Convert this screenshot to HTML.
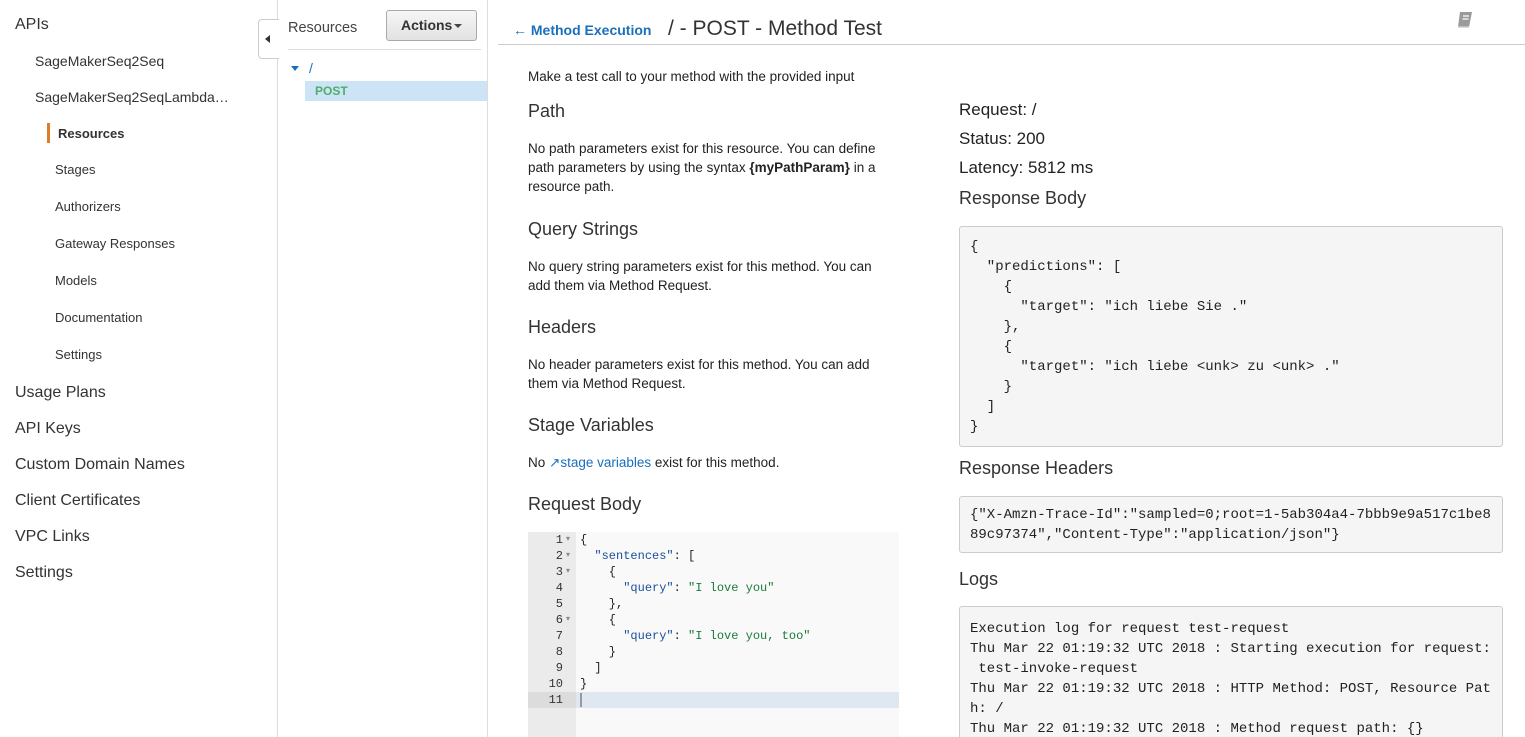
<!DOCTYPE html>
<html style="overflow:hidden;height:737px"><head><meta charset="utf-8"><style>
body{margin:0;width:1525px;height:737px;overflow:hidden;font-family:"Liberation Sans",sans-serif;color:#333;background:#fff;position:relative}
.a{position:absolute;white-space:nowrap}
.nav1{font-size:16px;color:#333}
.nav2{font-size:14px}
.nav3{font-size:13px}
.mono{font-family:"Liberation Mono",monospace}
.h{font-size:18px;color:#333}
.p{font-size:13.5px;line-height:19px;color:#222}
.box{position:absolute;background:#f5f5f5;border:1px solid #ccc;border-radius:3px;font-family:"Liberation Mono",monospace;font-size:14px;color:#222;white-space:pre;line-height:20px;overflow:hidden}
</style></head><body>
<div class="a" style="left:277px;top:0;width:1px;height:737px;background:#ddd"></div>
<div class="a" style="left:487px;top:0;width:1px;height:737px;background:#ddd"></div>
<div class="a nav1" style="left:15px;top:16px">APIs</div>
<div class="a nav2" style="left:35px;top:53px">SageMakerSeq2Seq</div>
<div class="a nav2" style="left:35px;top:89px">SageMakerSeq2SeqLambda…</div>
<div class="a" style="left:47px;top:123px;width:3px;height:20px;background:#e07b28"></div>
<div class="a nav3" style="left:58px;top:126px;font-weight:bold">Resources</div>
<div class="a nav3" style="left:55px;top:162px">Stages</div>
<div class="a nav3" style="left:55px;top:199px">Authorizers</div>
<div class="a nav3" style="left:55px;top:236px">Gateway Responses</div>
<div class="a nav3" style="left:55px;top:273px">Models</div>
<div class="a nav3" style="left:55px;top:310px">Documentation</div>
<div class="a nav3" style="left:55px;top:347px">Settings</div>
<div class="a nav1" style="left:15px;top:384px">Usage Plans</div>
<div class="a nav1" style="left:15px;top:420px">API Keys</div>
<div class="a nav1" style="left:15px;top:456px">Custom Domain Names</div>
<div class="a nav1" style="left:15px;top:492px">Client Certificates</div>
<div class="a nav1" style="left:15px;top:528px">VPC Links</div>
<div class="a nav1" style="left:15px;top:564px">Settings</div>
<div class="a" style="left:258px;top:19px;width:20px;height:38px;border:1px solid #ccc;border-right:none;border-radius:4px 0 0 4px;background:#fff"></div>
<div class="a" style="left:265px;top:35px;width:0;height:0;border-top:4px solid transparent;border-bottom:4px solid transparent;border-right:5px solid #333"></div>
<div class="a" style="left:288px;top:20px;font-size:14.5px;color:#444">Resources</div>
<div class="a" style="left:386px;top:10px;width:89px;height:29px;border:1px solid #aaa;border-radius:3px;background:linear-gradient(#f6f6f6,#e2e2e2)"></div>
<div class="a" style="left:401px;top:17px;font-size:14px;font-weight:bold;color:#333">Actions</div>
<div class="a" style="left:454px;top:24px;border-left:4px solid transparent;border-right:4px solid transparent;border-top:4px solid #444"></div>
<div class="a" style="left:288px;top:49px;width:193px;height:1px;background:#ddd"></div>
<div class="a" style="left:291px;top:66px;border-left:4px solid transparent;border-right:4px solid transparent;border-top:5px solid #1a6fbd"></div>
<div class="a" style="left:309px;top:60px;font-size:14px;color:#1a6fbd">/</div>
<div class="a" style="left:305px;top:81px;width:182px;height:20px;background:#cde4f7"></div>
<div class="a" style="left:315px;top:84px;font-size:12px;font-weight:bold;color:#4caf6a">POST</div>
<div class="a" style="left:513px;top:22px;font-size:14px;font-weight:bold;color:#1a6fbd">&#8592; Method Execution</div>
<div class="a" style="left:668px;top:17px;font-size:21px;color:#333">/ - POST - Method Test</div>
<svg class="a" style="left:1455px;top:10px" width="20" height="20" viewBox="0 0 20 20"><path d="M5 2h12l-3 15H3z" fill="#9a9a9a"/><path d="M8 6h6M7.5 9h6" stroke="#fff" stroke-width="1.3"/><path d="M3 17h11" stroke="#ccc" stroke-width="1.5"/></svg>
<div class="a" style="left:498px;top:44px;width:1027px;height:1px;background:#ccc"></div>
<div class="a p" style="left:528px;top:67px">Make a test call to your method with the provided input</div>
<div class="a h" style="left:528px;top:101px">Path</div>
<div class="a p" style="left:528px;top:139px">No path parameters exist for this resource. You can define<br>path parameters by using the syntax <b>{myPathParam}</b> in a<br>resource path.</div>
<div class="a h" style="left:528px;top:219px">Query Strings</div>
<div class="a p" style="left:528px;top:257px">No query string parameters exist for this method. You can<br>add them via Method Request.</div>
<div class="a h" style="left:528px;top:317px">Headers</div>
<div class="a p" style="left:528px;top:355px">No header parameters exist for this method. You can add<br>them via Method Request.</div>
<div class="a h" style="left:528px;top:415px">Stage Variables</div>
<div class="a p" style="left:528px;top:453px">No <span style="color:#1a6fbd">&#x2197;stage variables</span> exist for this method.</div>
<div class="a h" style="left:528px;top:494px">Request Body</div>
<div class="a" style="left:528px;top:532px;width:371px;height:205px;background:#f9f9f9"></div>
<div class="a" style="left:528px;top:532px;width:48px;height:205px;background:#ebebeb"></div>
<div class="a" style="left:528px;top:692px;width:48px;height:16px;background:#dcdcdc"></div>
<div class="a" style="left:576px;top:692px;width:323px;height:16px;background:#dfe8f1"></div>
<div class="a" style="left:580px;top:693px;width:2px;height:14px;background:#999"></div>
<div class="a mono" style="left:528px;top:532px;width:35px;text-align:right;font-size:12px;line-height:16px;color:#333;white-space:pre">1
2
3
4
5
6
7
8
9
10
11</div>
<div class="a mono" style="left:566px;top:532px;font-size:8px;line-height:16px;color:#888;white-space:pre">▾
▾
▾


▾</div>
<div class="a mono" style="left:580px;top:532px;font-size:12px;line-height:16px;color:#222;white-space:pre">{
  <span style="color:#1a4f9c">"sentences"</span>: [
    {
      <span style="color:#1a4f9c">"query"</span>: <span style="color:#1a7a3a">"I love you"</span>
    },
    {
      <span style="color:#1a4f9c">"query"</span>: <span style="color:#1a7a3a">"I love you, too"</span>
    }
  ]
}</div>
<div class="a" style="left:959px;top:100px;font-size:17px;color:#222">Request: /</div>
<div class="a" style="left:959px;top:129px;font-size:17px;color:#222">Status: 200</div>
<div class="a" style="left:959px;top:158px;font-size:17px;color:#222">Latency: 5812 ms</div>
<div class="a h" style="left:959px;top:188px">Response Body</div>
<div class="box" style="left:959px;top:226px;width:522px;height:199px;padding:10px">{
  "predictions": [
    {
      "target": "ich liebe Sie ."
    },
    {
      "target": "ich liebe &lt;unk&gt; zu &lt;unk&gt; ."
    }
  ]
}</div>
<div class="a h" style="left:959px;top:458px">Response Headers</div>
<div class="box" style="left:959px;top:496px;width:522px;height:39px;padding:8px 10px">{"X-Amzn-Trace-Id":"sampled=0;root=1-5ab304a4-7bbb9e9a517c1be8
89c97374","Content-Type":"application/json"}</div>
<div class="a h" style="left:959px;top:569px">Logs</div>
<div class="box" style="left:959px;top:606px;width:522px;height:140px;padding:12px 10px 0">Execution log for request test-request
Thu Mar 22 01:19:32 UTC 2018 : Starting execution for request:
 test-invoke-request
Thu Mar 22 01:19:32 UTC 2018 : HTTP Method: POST, Resource Pat
h: /
Thu Mar 22 01:19:32 UTC 2018 : Method request path: {}</div>
</body></html>
